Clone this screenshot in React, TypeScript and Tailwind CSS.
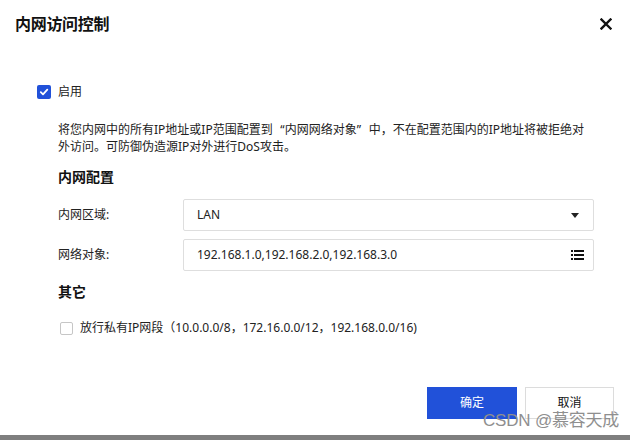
import React from "react";

const font = { fontFamily: '"Noto Sans", "Noto Sans CJK SC", sans-serif' };

export default function App() {
  return (
    <div className="relative w-[634px] h-[440px] bg-white overflow-hidden text-[#222]" style={font}>
      {/* header */}
      <div className="flex items-center justify-between pl-[15px] pr-[22px] h-[48px]">
        <div className="text-[16px] font-bold leading-6 text-[#111] tracking-[-0.3px]">内网访问控制</div>
        <svg width="12" height="12" viewBox="0 0 12 12" className="text-[#111]">
          <path d="M1.5 1.5 L10.5 10.5 M10.5 1.5 L1.5 10.5" stroke="currentColor" strokeWidth="2.4" strokeLinecap="square" />
        </svg>
      </div>

      <div className="pl-[37px] pr-[40px]">
        {/* enable */}
        <div className="mt-[37px] flex items-center h-[14px]">
          <div className="w-[14px] h-[14px] rounded-[2px] bg-[#2151d9] flex items-center justify-center">
            <svg width="10" height="10" viewBox="0 0 10 10">
              <path d="M1.8 5.2 L4 7.3 L8.3 2.6" stroke="white" strokeWidth="1.8" fill="none" strokeLinecap="round" strokeLinejoin="round" />
            </svg>
          </div>
          <span className="ml-[7px] text-[12px] leading-[14px]">启用</span>
        </div>

        <div className="pl-[21px]">
          <p className="mt-[22px] text-[12px] leading-[17px] text-[#222] whitespace-nowrap">
            将您内网中的所有IP地址或IP范围配置到
            <span className="inline-block w-[12px] text-right">“</span>
            内网网络对象
            <span className="inline-block w-[12px] text-left">”</span>
            中，不在配置范围内的IP地址将被拒绝对
            <br />
            外访问。可防御伪造源IP对外进行DoS攻击。
          </p>

          <div className="mt-[12px] text-[14px] font-bold leading-[20px] text-[#111]">内网配置</div>

          <div className="mt-[12px] flex items-center">
            <div className="w-[125px] text-[12px] leading-[16px]">内网区域:</div>
            <div className="flex-1 h-[32px] border border-[#dedede] rounded-[2px] flex items-center justify-between pl-[13px] pr-[14px]">
              <span className="text-[12px] leading-[16px]">LAN</span>
              <svg width="8" height="5" viewBox="0 0 8 5">
                <path d="M0 0 L8 0 L4 5 Z" fill="#222" />
              </svg>
            </div>
          </div>

          <div className="mt-[8px] flex items-center">
            <div className="w-[125px] text-[12px] leading-[16px]">网络对象:</div>
            <div className="flex-1 h-[32px] border border-[#dedede] rounded-[2px] flex items-center justify-between pl-[13px] pr-[9px]">
              <span className="text-[12px] leading-[16px]">192.168.1.0,192.168.2.0,192.168.3.0</span>
              <svg width="13" height="10" viewBox="0 0 13 10">
                <rect x="0" y="0" width="2" height="2" fill="#111" />
                <rect x="3" y="0" width="10" height="2" fill="#111" />
                <rect x="0" y="4" width="2" height="2" fill="#111" />
                <rect x="3" y="4" width="10" height="2" fill="#111" />
                <rect x="0" y="8" width="2" height="2" fill="#111" />
                <rect x="3" y="8" width="10" height="2" fill="#111" />
              </svg>
            </div>
          </div>

          <div className="mt-[11px] text-[14px] font-bold leading-[20px] text-[#111]">其它</div>

          <div className="mt-[19px] flex items-center h-[14px]">
            <div className="ml-[2px] w-[13px] h-[13px] rounded-[2px] border border-[#c6c6c6] bg-white" />
            <span className="ml-[7px] text-[12px] leading-[14px] whitespace-nowrap">放行私有IP网段（10.0.0.0/8，172.16.0.0/12，192.168.0.0/16)</span>
          </div>
        </div>
      </div>

      {/* footer buttons */}
      <div className="absolute left-0 right-0 top-[387px] flex justify-end gap-[8px] pr-[20px]">
        <button className="w-[90px] h-[32px] bg-[#2151d9] text-white text-[12px]">确定</button>
        <button className="w-[89px] h-[32px] bg-white border border-[#dcdcdc] text-[12px] text-[#111]">取消</button>
      </div>

      {/* watermark */}
      <div className="absolute left-[483px] top-[410px] text-[17px] leading-[22px] text-[#8f8f8f] tracking-[-0.2px]" style={{ fontFamily: '"Liberation Sans", "Noto Sans CJK SC", sans-serif' }}>
        CSDN @慕容天成
      </div>

      {/* bottom bar */}
      <div className="absolute left-0 bottom-0 w-[630px] h-[5px] bg-[#7f7f7f]" />
    </div>
  );
}
